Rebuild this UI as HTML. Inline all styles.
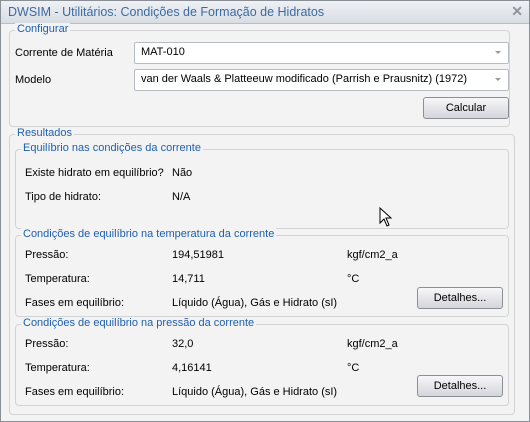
<!DOCTYPE html>
<html><head><style>
body{margin:0;width:530px;height:422px;overflow:hidden;font-family:"Liberation Sans",sans-serif;font-size:11px;color:#000;}
.win{position:absolute;left:0;top:0;width:528px;height:420px;border:1px solid #8a8f96;background:#f3f3f3;}
.title{position:absolute;left:0;top:0;width:528px;height:22px;background:linear-gradient(#eef1f5,#d8dde4);border-bottom:1px solid #b9bec6;}
.title span{position:absolute;left:7px;top:4px;font-size:12.5px;color:#3d6a9e;}
.x{position:absolute;right:6px;top:2px;font-size:14px;color:#8c949e;font-weight:bold;}
.a{position:absolute;white-space:nowrap;}
.g{position:absolute;border:1px solid #d3d3d3;border-radius:4px;}
.gl{position:absolute;background:#f3f3f3;color:#1f5fae;padding:0 2px;font-size:11px;white-space:nowrap;}
.combo{position:absolute;height:20px;border:1px solid #b7bcc4;border-radius:2px;background:#fff;}
.combo span{position:absolute;left:6px;top:3px;}
.combo i{position:absolute;right:7px;top:8px;border-left:3px solid transparent;border-right:3px solid transparent;border-top:3px solid #999;}
.btn{position:absolute;border:1px solid #8a8f96;border-radius:3px;background:linear-gradient(#f7f7f9,#e6e6ea 50%,#d3d5dc);text-align:center;line-height:20px;}
</style></head><body>
<div class="win">
<div class="title"><span>DWSIM - Utilitários: Condições de Formação de Hidratos</span><div class="x">✕</div></div>
<div class="g" style="left:8px;top:29px;width:499px;height:95px"></div>
<div class="gl" style="left:14px;top:22px">Configurar</div>
<div class="a" style="left:14px;top:46px">Corrente de Matéria</div>
<div class="combo" style="left:133px;top:41px;width:373px"><span>MAT-010</span><i></i></div>
<div class="a" style="left:14px;top:73px">Modelo</div>
<div class="combo" style="left:133px;top:68px;width:373px"><span>van der Waals &amp; Platteeuw modificado (Parrish e Prausnitz) (1972)</span><i></i></div>
<div class="btn" style="left:422px;top:96px;width:84px;height:20px">Calcular</div>

<div class="g" style="left:8px;top:133px;width:504px;height:279px"></div>
<div class="gl" style="left:14px;top:126px">Resultados</div>

<div class="g" style="left:14px;top:148px;width:492px;height:78px"></div>
<div class="gl" style="left:20px;top:141px">Equilíbrio nas condições da corrente</div>
<div class="a" style="left:24px;top:166px">Existe hidrato em equilíbrio?</div>
<div class="a" style="left:171px;top:166px">Não</div>
<div class="a" style="left:24px;top:190px">Tipo de hidrato:</div>
<div class="a" style="left:171px;top:190px">N/A</div>

<div class="g" style="left:14px;top:234px;width:492px;height:80px"></div>
<div class="gl" style="left:20px;top:227px">Condições de equilíbrio na temperatura da corrente</div>
<div class="a" style="left:24px;top:248px">Pressão:</div>
<div class="a" style="left:171px;top:248px">194,51981</div>
<div class="a" style="left:346px;top:248px">kgf/cm2_a</div>
<div class="a" style="left:24px;top:272px">Temperatura:</div>
<div class="a" style="left:171px;top:272px">14,711</div>
<div class="a" style="left:346px;top:272px">°C</div>
<div class="a" style="left:24px;top:296px">Fases em equilíbrio:</div>
<div class="a" style="left:171px;top:296px">Líquido (Água), Gás e Hidrato (sI)</div>
<div class="btn" style="left:416px;top:286px;width:84px;height:20px">Detalhes...</div>

<div class="g" style="left:14px;top:323px;width:492px;height:80px"></div>
<div class="gl" style="left:20px;top:316px">Condições de equilíbrio na pressão da corrente</div>
<div class="a" style="left:24px;top:337px">Pressão:</div>
<div class="a" style="left:171px;top:337px">32,0</div>
<div class="a" style="left:346px;top:337px">kgf/cm2_a</div>
<div class="a" style="left:24px;top:361px">Temperatura:</div>
<div class="a" style="left:171px;top:361px">4,16141</div>
<div class="a" style="left:346px;top:361px">°C</div>
<div class="a" style="left:24px;top:385px">Fases em equilíbrio:</div>
<div class="a" style="left:171px;top:385px">Líquido (Água), Gás e Hidrato (sI)</div>
<div class="btn" style="left:416px;top:374px;width:84px;height:20px">Detalhes...</div>

<svg style="position:absolute;left:378px;top:206px" width="14" height="20" viewBox="0 0 14 20"><path d="M1 1 L1 16 L5 12 L8 19 L10 18 L7 11 L12 11 Z" fill="#fff" stroke="#000" stroke-width="1"/></svg>
</div>
</body></html>
